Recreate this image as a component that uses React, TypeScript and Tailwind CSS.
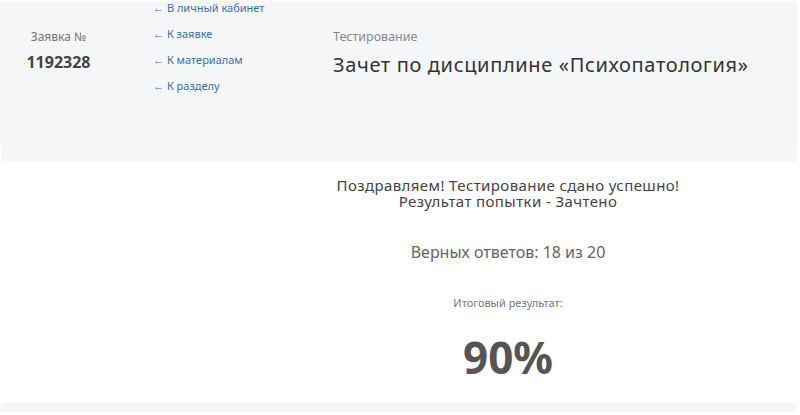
const links = ['В личный кабинет', 'К заявке', 'К материалам', 'К разделу'];

export default function App() {
  return (
    <div className="w-[800px] h-[415px] overflow-hidden bg-white font-['Noto_Sans',sans-serif]">
      {/* Header */}
      <div className="mt-px mr-[3px] h-[144px] bg-[#f5f6f8] shadow-[0_1px_3px_rgba(0,0,0,0.06)] flex">
        <div className="w-[117px] flex flex-col items-center pt-[27px]">
          <div className="text-[12px] text-[#777]">Заявка №</div>
          <div className="mt-[4px] text-[16px] font-bold text-[#444]">1192328</div>
        </div>
        <div className="w-[36px]" />
        <div className="w-[180px] flex flex-col gap-[8px] -mt-[2px]">
          {links.map(l => (
            <a key={l} href="#" className="text-[11px] leading-[18px] text-[#3b6ea8]">
              ← {l}
            </a>
          ))}
        </div>
        <div className="flex-1 pt-[27px]">
          <div className="text-[12.5px] text-[#888]">Тестирование</div>
          <div className="mt-[3px] text-[20px] tracking-[0.65px] text-[#333]">Зачет по дисциплине «Психопатология»</div>
        </div>
      </div>
      <div className="mt-[2px] ml-px mr-[3px] h-[14px] bg-[#f5f6f8]" />

      {/* Result */}
      <div className="pl-[218px] pr-[2px] flex flex-col items-center text-center">
        <div className="mt-[16px] flex flex-col items-center text-[15px] leading-[16px] tracking-[0.4px] text-[#444]">
          <div>Поздравляем! Тестирование сдано успешно!</div>
          <div>Результат попытки - Зачтено</div>
        </div>
        <div className="mt-[31px] text-[16px] text-[#666]">Верных ответов: 18 из 20</div>
        <div className="mt-[31px] text-[11px] text-[#777]">Итоговый результат:</div>
        <div className="mt-[20px] text-[44px] leading-[50px] font-bold text-[#555]">90%</div>
      </div>
      <div className="mt-[21px] ml-px mr-[3px] h-[9px] bg-[#f5f6f8]" />
    </div>
  );
}
